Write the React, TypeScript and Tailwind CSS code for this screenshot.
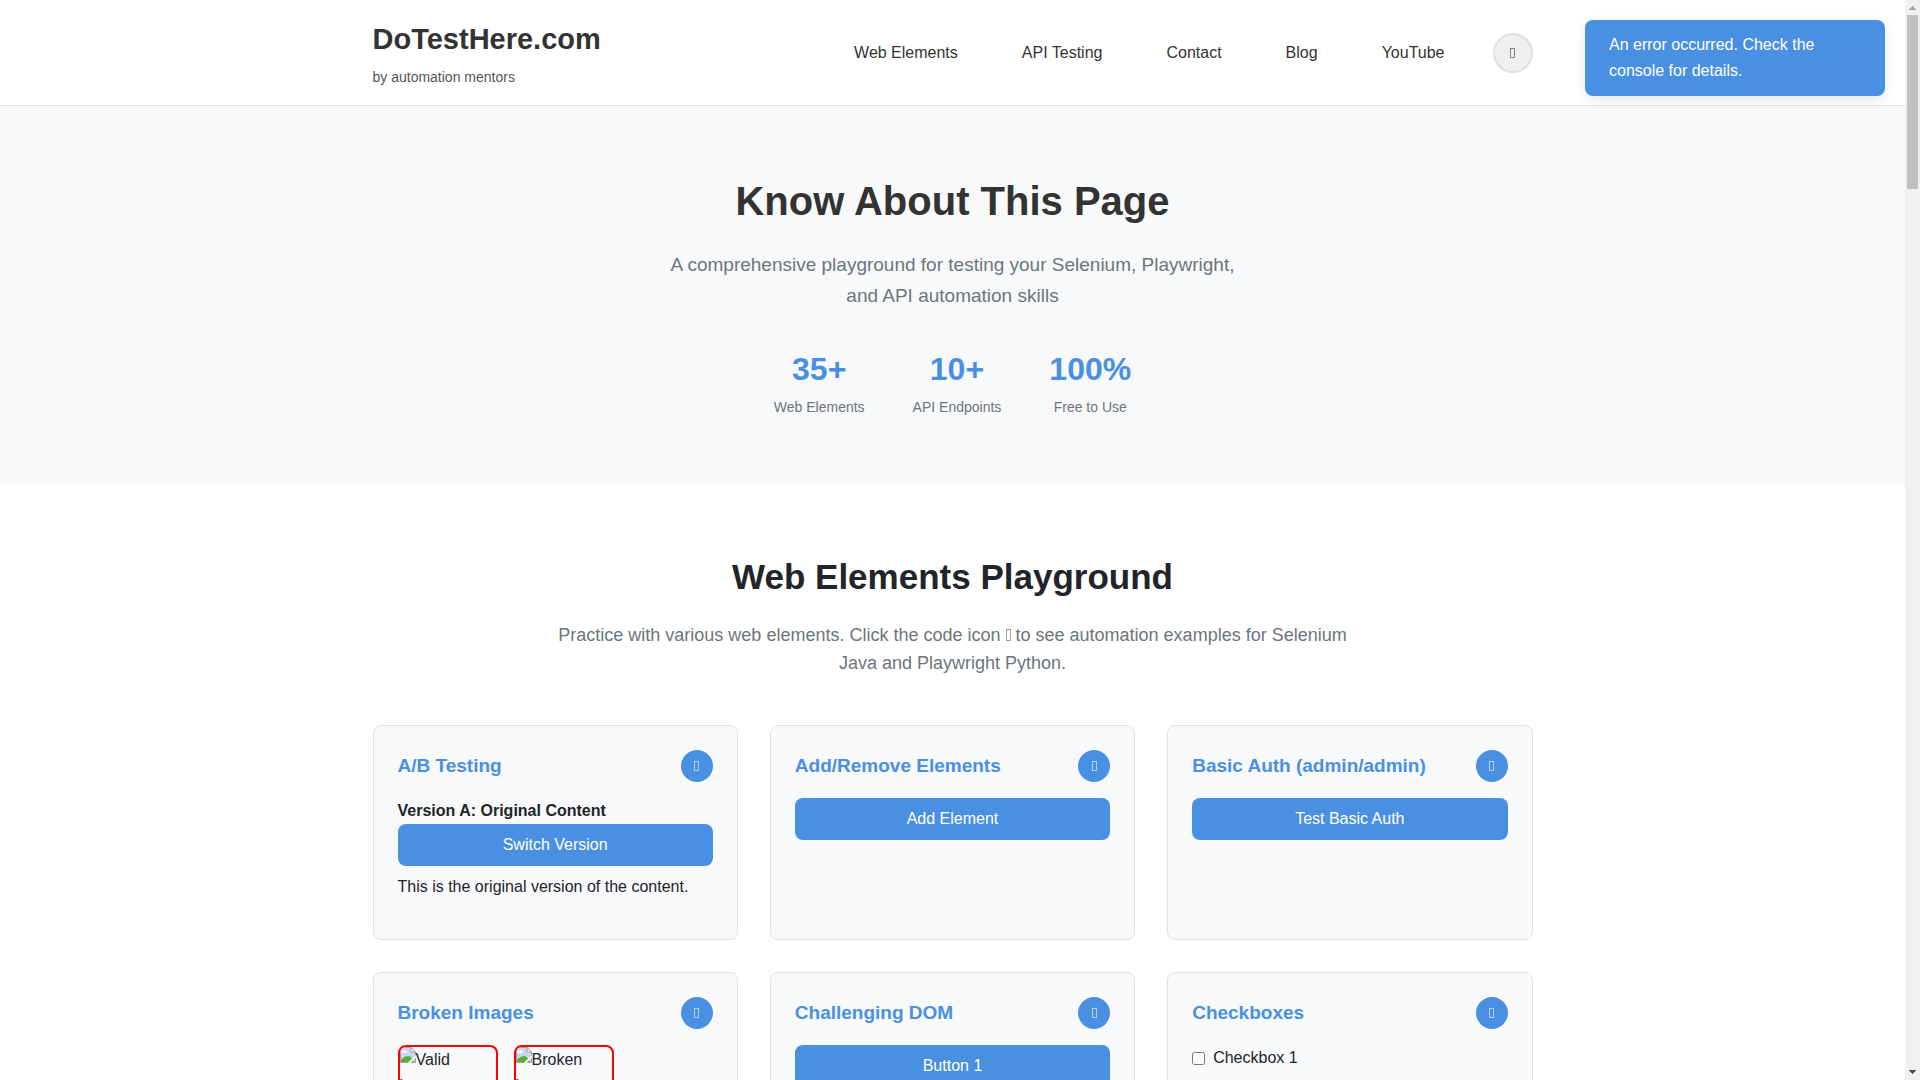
import React, { useState } from "react";

type Stat = {
  value: string;
  label: string;
};

const NAV_LINKS = ["Web Elements", "API Testing", "Contact", "Blog", "YouTube"];

const STATS: Stat[] = [
  { value: "35+", label: "Web Elements" },
  { value: "10+", label: "API Endpoints" },
  { value: "100%", label: "Free to Use" },
];

export default function App() {
  return (
    <div className="flex h-screen overflow-hidden bg-white font-['Liberation_Sans',Arial,sans-serif] text-base leading-[26px] text-[#212529]">
      <div className="relative min-w-0 flex-1 overflow-hidden">
        <Header />
        <main>
          <Hero />
          <Playground />
        </main>
        <Toast />
      </div>
      <Scrollbar />
    </div>
  );
}

function Header() {
  return (
    <header className="border-b border-[#e0e0e0] bg-white">
      <div className="mx-auto flex max-w-[1200px] items-center justify-between px-5 py-4">
        <div className="text-[#333]">
          <div className="text-[29px] font-bold leading-[46px]">DoTestHere.com</div>
          <div className="mt-1 text-[14px] leading-[23px] text-[#555]">by automation mentors</div>
        </div>
        <div className="flex items-center gap-8">
          <nav className="flex gap-8">
            {NAV_LINKS.map((label) => (
              <a key={label} href="#" className="px-4 text-[#333]">
                {label}
              </a>
            ))}
          </nav>
          <button
            aria-label="Toggle theme"
            className="flex size-10 items-center justify-center rounded-full border-2 border-[#e0e0e0] bg-[#efefef] text-[#333]"
          >
            <GlyphBox className="h-[10px] w-[5px] opacity-70" />
          </button>
        </div>
      </div>
    </header>
  );
}

function Hero() {
  return (
    <section className="bg-[#f8f9fb] px-5 py-16 text-center">
      <h1 className="mb-4 text-[40px] font-bold leading-[63px] text-[#333]">Know About This Page</h1>
      <p className="mx-auto mb-8 max-w-[600px] text-[19px] leading-[31px] text-[#6c757d]">
        A comprehensive playground for testing your Selenium, Playwright, and API automation skills
      </p>
      <div className="flex justify-center gap-12">
        {STATS.map((stat) => (
          <div key={stat.label}>
            <div className="text-[32px] font-bold leading-[52px] text-[#4a90e2]">{stat.value}</div>
            <div className="text-[14px] leading-[25px] text-[#6c757d]">{stat.label}</div>
          </div>
        ))}
      </div>
    </section>
  );
}

function Playground() {
  const [version, setVersion] = useState<"A" | "B">("A");

  return (
    <section className="mx-auto max-w-[1200px] px-5 py-16">
      <h2 className="mb-4 text-center text-[35px] font-bold leading-[57px]">Web Elements Playground</h2>
      <p className="mx-auto mb-12 max-w-[800px] text-center text-[18px] leading-[28px] text-[#6c757d]">
        Practice with various web elements. Click the code icon{" "}
        <GlyphBox className="inline-block h-[12px] w-[5px] align-baseline opacity-80" /> to see automation
        examples for Selenium Java and Playwright Python.
      </p>

      <div className="grid grid-cols-3 gap-8">
        <Card title="A/B Testing">
          <p className="font-bold">
            {version === "A" ? "Version A: Original Content" : "Version B: New Content"}
          </p>
          <ActionButton onClick={() => setVersion(version === "A" ? "B" : "A")}>
            Switch Version
          </ActionButton>
          <p className="mb-4 mt-2 leading-[25px]">This is the original version of the content.</p>
        </Card>

        <Card title="Add/Remove Elements">
          <ActionButton>Add Element</ActionButton>
        </Card>

        <Card title="Basic Auth (admin/admin)">
          <ActionButton>Test Basic Auth</ActionButton>
        </Card>

        <Card title="Broken Images">
          <div className="flex gap-4">
            <BrokenImage alt="Valid image" />
            <BrokenImage alt="Broken image" />
          </div>
        </Card>

        <Card title="Challenging DOM">
          <ActionButton>Button 1</ActionButton>
        </Card>

        <Card title="Checkboxes">
          <label className="flex items-center gap-2">
            <input type="checkbox" className="size-[13px]" />
            Checkbox 1
          </label>
        </Card>
      </div>
    </section>
  );
}

function Card({ title, children }: { title: string; children: React.ReactNode }) {
  return (
    <div className="rounded-lg border border-[#dee2e6] bg-[#f8f9fb] p-6">
      <div className="mb-4 flex items-center justify-between">
        <h3 className="text-[19px] font-bold text-[#4a90e2]">{title}</h3>
        <button
          aria-label={`Show code for ${title}`}
          className="flex size-8 items-center justify-center rounded-full bg-[#4a90e2] text-white"
        >
          <GlyphBox className="h-[10px] w-[5px] opacity-70" />
        </button>
      </div>
      {children}
    </div>
  );
}

// hollow box shown where the icon font has no glyph
function GlyphBox({ className }: { className: string }) {
  return (
    <svg viewBox="0 0 5 10" preserveAspectRatio="none" className={className} aria-hidden="true">
      <rect x="0.5" y="0.5" width="4" height="9" fill="none" stroke="currentColor" strokeWidth="0.8" />
    </svg>
  );
}

function ActionButton({
  children,
  onClick,
}: {
  children: React.ReactNode;
  onClick?: () => void;
}) {
  return (
    <button
      onClick={onClick}
      className="block w-full rounded-lg bg-[#4a90e2] py-2 text-center text-white"
    >
      {children}
    </button>
  );
}

function BrokenImage({ alt }: { alt: string }) {
  return (
    <div className="size-[100px] overflow-hidden rounded-lg border-2 border-[#ff0000]">
      <svg width="16" height="16" viewBox="0 0 16 16" className="float-left" aria-hidden="true">
        <path d="M0.5 0.5H11L15.5 5V15.5H0.5Z" fill="#c5d6f8" stroke="#a0a0a0" />
        <path d="M11 0.5V5H15.5Z" fill="#fff" stroke="#a0a0a0" />
        <path d="M1.5 6a1.5 1.5 0 0 1 1.5-2a1.8 1.8 0 0 1 3.2 0.3a1 1 0 0 1 0.3 1.7Z" fill="#fff" />
        <path d="M1 15V13Q4.5 9 8 9Q11.500 9.500 14 15Z" fill="#5aad3a" />
        <path d="M7.500 16L16 8V10.500L10.500 16Z" fill="#f8f9fb" />
      </svg>
      {alt}
    </div>
  );
}

function Toast() {
  return (
    <div
      role="alert"
      className="absolute right-5 top-5 w-[300px] rounded-lg bg-[#4a90e2] px-6 py-3 text-white shadow-[0_4px_12px_rgba(0,0,0,0.1)]"
    >
      An error occurred. Check the console for details.
    </div>
  );
}

function Scrollbar() {
  return (
    <div className="flex w-[15px] flex-col items-center bg-[#f1f1f1]" aria-hidden="true">
      <svg width="15" height="15" viewBox="0 0 15 15" shapeRendering="crispEdges">
        <path d="M4 10V9H5V8H6V7H7V6H8V7H9V8H10V9H11V10Z" fill="#a3a3a3" />
      </svg>
      <div className="h-[174px] w-[11px] bg-[#c1c1c1]" />
      <svg width="15" height="15" viewBox="0 0 15 15" shapeRendering="crispEdges" className="mt-auto">
        <path d="M4 5V6H5V7H6V8H7V9H8V8H9V7H10V6H11V5Z" fill="#505050" />
      </svg>
    </div>
  );
}
